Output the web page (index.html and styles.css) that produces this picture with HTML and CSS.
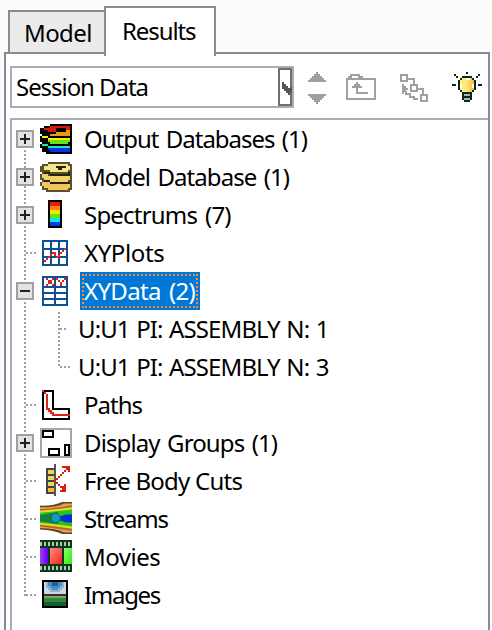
FILE: index.html
```html
<!DOCTYPE html>
<html lang="en">
<head>
<meta charset="utf-8">
<title>Results</title>
<link rel="stylesheet" href="styles.css">
</head>
<body>
<svg class="defs" width="0" height="0">
  <defs>
    <path id="rail-even" class="dots" d="M25 2V38"/>
    <path id="rail-odd" class="dots" d="M25 0V38"/>
    <g id="plus"><path fill="#a0a0a0" d="M16 10h18v18H16z"/><path fill="#e3e3e3" d="M18 12h14v14H18z"/><path stroke="#202020" stroke-width="2" d="M20 19h10M25 14v10"/></g>
    <g id="minus"><path fill="#a0a0a0" d="M16 10h18v18H16z"/><path fill="#e3e3e3" d="M18 12h14v14H18z"/><path stroke="#202020" stroke-width="2" d="M20 19h10"/></g>
    <linearGradient id="glow"><stop stop-color="#fff176"/><stop offset=".45" stop-color="#ffe680"/><stop offset="1" stop-color="#f8b840"/></linearGradient>
    <linearGradient id="violet"><stop stop-color="#a040ff"/><stop offset="1" stop-color="#6800ee"/></linearGradient>
    <linearGradient id="red" x2="1" y2="1"><stop stop-color="#ff9080"/><stop offset="1" stop-color="#f42020"/></linearGradient>
    <linearGradient id="green" x2="1" y2="1"><stop stop-color="#90ff70"/><stop offset="1" stop-color="#28ee08"/></linearGradient>
  </defs>
</svg>
<nav class="tabs">
  <div class="tab model"><span>Model</span></div>
  <div class="tab results"><span>Results</span></div>
</nav>
<main class="panel">
  <div class="toolbar">
    <div class="combo"><span>Session Data</span>
      <svg class="drop" width="14" height="38"><path fill="#fff" stroke="#707070" stroke-width="2" d="M1 1h12v36H1z"/><path fill="#555" d="M4 14h2v2h2v2h2v2h2v-1h2v6h-2v2h-2v-2H8v-2H6v-2H4z"/></svg>
    </div>
    <svg class="spin" width="18" height="32"><path fill="#a0a0a0" d="M8 0h2v2h2v2h2v2h2v2h2v2H0V8h2V6h2V4h2V2h2zM0 22h18v2h-2v2h-2v2h-2v2h-2v2H8v-2H6v-2H4v-2H2v-2H0z"/></svg>
    <svg class="folder" width="30" height="26"><path fill="none" stroke="#a0a0a0" stroke-width="2" d="M1 5h28v20H1zM3 4V3h2V1h8v2h3v2M11 9v10h11"/><path fill="#a0a0a0" d="M10 8h2v2h2v2h2v2H6v-2h2v-2h2z"/></svg>
    <svg class="chain" width="28" height="28"><path fill="none" stroke="#a0a0a0" stroke-width="2" d="M1 1h6v6H1zM11 11h6v6h-6zM21 21h6v6h-6zM8 5h6v6M18 15h5v6M6 17v3h4v3h4v2h4"/><path fill="#a0a0a0" d="M2 10h2v2h2v2h2v2H6v2H4v2H2z"/></svg>
    <svg class="bulb" width="30" height="30"><path fill="#062b18" d="M14 0h2v2h-2zM2 2h2v2h2v2H4V4H2zM26 2h2v2h-2v2h-2V4h2zM0 12h4v2H0zM26 12h4v2h-4zM10 4h10v2h2v2h2v10h-2v2h-2v8h-2v2h-6v-2h-2v-8H8v-2H6V8h2V6h2z"/><path fill="url(#glow)" d="M10 6h10v2h2v10h-2v2H10v-2H8V8h2z"/><path fill="#fff" d="M14 6h4v2h-4zM8 12h2v4H8zM20 12h2v4h-2z"/><path fill="#b0b0b0" d="M12 22h6v2h-6zM12 26h6v2h-6z"/></svg>
  </div>
  <ul class="tree">
    <li><svg viewBox="12 0 68 38"><path class="dots" d="M25 30V38"/><use href="#plus"/>
      <g transform="translate(40 4) scale(2)"><path d="M5 0h11v15H3v-1H1v-2H0v-2h1V9H0V6h1V5H0V2h2V1h3z"/><path fill="#d8170d" d="M5 1h10v2h-2V2H8v2H4V3H2V2h3z"/><path fill="#ee9a08" d="M8 4h5V3h2v3H5V5h3z"/><path fill="#f5ed14" d="M1 6h3v1h11v1H4V7H1z"/><path fill="#65e413" d="M4 8h11v1h-1v1H5V9H4z"/><path fill="#20e5c0" d="M1 10h3v1h11v1H4v-1H1z"/><path fill="#0b2fe9" d="M4 12h11v2H5v-1H4z"/></g></svg><span class="t1">Output Databases (1)</span></li>
    <li><svg viewBox="12 0 68 38"><use href="#rail-odd"/><use href="#plus"/>
      <g transform="translate(40 4) scale(2)"><path fill="#5a5228" d="M4 0h11v1h1v13h-1v1H3v-1H1v-2H0v-2h1V9H0V6h1V5H0V2h1V1h3z"/><path fill="#f3e68a" d="M4 1h10v1h1v2h-1v1H5V4H2V2h2z"/><path fill="#25220f" d="M8 2h5v1h-2v1H9V3H8zM2 5h3v1h9V5h1v2H5V6H2zM2 9h3v1h10v1H5v-1H2z"/><path fill="#efd366" d="M1 6h3v1h11v2h-1v1H5V9H2V8H1z"/><path fill="#f2c562" d="M1 10h4v1h10v2h-1v1H4v-1H2v-1H1z"/></g></svg><span class="t2">Model Database (1)</span></li>
    <li><svg viewBox="12 0 68 38"><use href="#rail-even"/><use href="#plus"/><path d="M48 4h14v28H48z"/><path fill="#f01808" d="M50 6h10v4H50z"/><path fill="#f58312" d="M50 10h10v4H50z"/><path fill="#f8e600" d="M50 14h10v4H50z"/><path fill="#64e60a" d="M50 18h10v4H50z"/><path fill="#08e9df" d="M50 22h10v4H50z"/><path fill="#0838ea" d="M50 26h10v4H50z"/></svg><span class="t3">Spectrums (7)</span></li>
    <li><svg viewBox="12 0 68 38"><use href="#rail-odd"/><path class="dots" d="M26 19h12"/><path fill="none" stroke="#124f92" stroke-width="2" d="M43 7h24v24H43zM51 7v24M59 7v24M43 15h24M43 23h24"/><path fill="#e2221c" d="M44 26h2v2h-2zM46 24h2v2h-2zM48 22h2v2h-2zM50 20h2v2h-2zM52 18h4v2h-4zM54 20h2v2h-2zM56 22h4v2h-4zM58 20h2v2h-2zM60 18h2v2h-2zM62 16h2v2h-2zM64 14h2v2h-2z"/></svg><span class="t4">XYPlots</span></li>
    <li><svg viewBox="12 0 68 38"><use href="#rail-even"/><use href="#minus"/><path fill="none" stroke="#124f92" stroke-width="2" d="M43 5h24v28H43zM55 5v28M43 15h24M43 21h24M43 27h24"/><path fill="#e2221c" d="M46 6h2v2h2v0h2V6h2v2h-2v4h2v2h-2v-2h-4v2h-2v-2h2V8h-2zM56 6h2v2h2v2h2V8h2V6h2v2h-2v2h-2v4h-2v-4h-2V8h-2z"/></svg><span class="selected"><b class="t5">XYData (2)</b></span></li>
    <li class="child"><svg viewBox="12 0 68 38"><use href="#rail-odd"/><path class="dots" d="M59 2V38M60 19h8"/></svg><span class="t6">U:U1 PI: ASSEMBLY N: 1</span></li>
    <li class="child"><svg viewBox="12 0 68 38"><use href="#rail-even"/><path class="dots" d="M59 0V18M60 19h10"/></svg><span class="t6">U:U1 PI: ASSEMBLY N: 3</span></li>
    <li><svg viewBox="12 0 68 38"><use href="#rail-odd"/><path class="dots" d="M26 19h12"/><path fill="#fff" stroke="#000" stroke-width="2" d="M43 5h10v18h16v10H43z"/><path fill="#e2221c" d="M42 4h2v2h2v2h2v14h2v2h2v2h2v2h16v2H52v-2h-2v-2h-2v-2h-2V8h-2V6h-2z"/></svg><span class="t7">Paths</span></li>
    <li><svg viewBox="12 0 68 38"><use href="#rail-even"/><use href="#plus"/><path fill="#fff" stroke="#aaa5a7" stroke-width="2" d="M41 5h30v28H41z"/><path fill="#fff" stroke="#000" stroke-width="2" d="M43 7h10v6H43zM49 25h10v6H49zM65 21h4v10h-4z"/></svg><span class="t8">Display Groups (1)</span></li>
    <li><svg viewBox="12 0 68 38"><use href="#rail-odd"/><path class="dots" d="M26 19h12"/><path fill="#ead85c" stroke="#444" stroke-width="2" d="M47 7h8v24h-8zM47 13h8M47 19h8M47 25h8"/><path fill="#f8bc31" d="M48 26h6v4h-6z"/><path stroke="#555" stroke-width="2" d="M55 2v32"/><path fill="#d91d0b" d="M54 18h2v-2h2v-2h2v-2h2v-2h2V8h2V6h-4V4h8v6h-2V8h-2v2h-2v2h-2v2h-2v2h-2v2h-2v2h2v2h2v2h4v-2h2v8h-6v-2h2v-2h-2v-2h-2v-2h-2v-2h-2z"/></svg><span class="t9">Free Body Cuts</span></li>
    <li><svg viewBox="12 0 68 38"><use href="#rail-even"/><path class="dots" d="M26 19h12"/><g class="smooth" transform="translate(40 2) scale(2)"><path fill="#6b421f" d="M0 1.8Q7 2 11 0h5v16h-5Q7 14 0 13.7z"/><path fill="#d8a46c" d="M0 2.6Q8 3 12 .8h4v14.4h-4Q8 13.2 0 13z"/><path fill="#b9671f" d="M0 3.6Q8 3 16 1.6v12.8Q8 13 0 12.2z"/><path fill="#e4e01a" d="M0 4.4Q8 3.8 16 2.6v10.8Q8 12.2 0 11.4z"/><path fill="#25c51d" d="M0 5.4Q8 4.8 16 3.8v8.4Q8 11.2 0 10.4z"/><path fill="#15803c" d="M0 6.6L9 5v6L0 9.6z"/><path fill="#062ddb" d="M7 8l6-1.8h3v4h-3z"/><circle fill="#129bc0" stroke="#1b5a50" stroke-width=".5" cx="7.8" cy="8" r="2.4"/></g></svg><span class="t10">Streams</span></li>
    <li><svg viewBox="12 0 68 38"><use href="#rail-odd"/><path class="dots" d="M26 19h12"/><path fill="#073b18" d="M40 2h32v32H40z"/><path stroke="#b5c4b5" stroke-width="4" stroke-dasharray="2 2" d="M40 6h32M40 30h32"/><path fill="url(#violet)" d="M40 10h8v16h-8z"/><path fill="url(#red)" d="M50 10h12v16H50z"/><path fill="url(#green)" d="M64 10h8v16h-8z"/></svg><span class="t11">Movies</span></li>
    <li><svg viewBox="12 0 68 38"><path class="dots" d="M25 2V20M26 19h10"/><path d="M42 4h26v28H42z"/><path fill="#c9d9ed" d="M44 6h22v12H44z"/><path fill="#8cb2d6" d="M46 6h18v6h-2v2h-2v2H50v-2h-2v-2h-2z"/><path fill="#508dbf" d="M48 6h14v4h-2v2h-2v2h-6v-2h-2v-2h-2z"/><path fill="#17639f" d="M52 6h6v4h-6z"/><path fill="#4b2b20" d="M44 18h22v2H44z"/><path fill="#68b168" d="M44 20h22v2H44z"/><path fill="#35863c" d="M44 22h22v4H44z"/><path fill="#12602d" d="M44 26h22v4H44z"/></svg><span class="t12">Images</span></li>
  </ul>
</main>
</body>
</html>
```
FILE: styles.css
```css
* { box-sizing: border-box; }
html, body { height: 100%; }
body {
  margin: 0;
  padding: 6px 0 0 4px;
  overflow: hidden;
  background: #fcfcfc;
  color: #000;
  font: 24px/38px "Noto Sans", "Open Sans", sans-serif;
}
svg { display: block; flex: none; shape-rendering: crispEdges; }
.smooth { shape-rendering: auto; }
.tabs { display: flex; align-items: flex-end; padding-left: 4px; height: 46px; }
.tab { border: 2px solid #868b94; border-bottom: 0; white-space: nowrap; }
.tab span { display: block; }
.model { width: 96px; height: 42px; padding: 2px 0 0 14px; background: #ebebeb; border-right: 0; letter-spacing: -.6px; }
.results { width: 112px; height: 50px; margin-bottom: -4px; padding: 4px 0 0 16px; background: #fff; position: relative; letter-spacing: -1.1px; }
.panel { width: 486px; height: 578px; border: 2px solid #868b94; border-bottom: 0; background: #fff; }
.toolbar { display: flex; align-items: flex-start; height: 64px; padding: 12px 0 0 4px; }
.combo { display: flex; justify-content: space-between; width: 284px; height: 42px; border: 2px solid #a8adb5; padding-left: 4px; letter-spacing: -1.05px; }
.spin { margin: 6px 0 0 14px; }
.folder { margin: 8px 0 0 20px; }
.chain { margin: 8px 0 0 24px; }
.bulb { margin: 6px 0 0 24px; }
.tree { margin: 0 0 0 4px; padding: 0; height: 514px; border: 2px solid #a8adb5; border-width: 2px 0 0 2px; list-style: none; }
.tree li { display: flex; height: 38px; }
.tree svg { width: 68px; height: 38px; }
.tree span { height: 38px; padding-left: 4px; white-space: nowrap; }
.tree .child span { margin-left: -6px; }
.dots { fill: none; stroke: #a0a0a0; stroke-width: 2; stroke-dasharray: 2 2; }
.tree .selected { width: 120px; padding: 2px; background: #0078d7; color: #fff; }
.selected b { display: block; height: 34px; padding-left: 0; line-height: 30px; font-weight: 400; border: 2px dotted #f58a3c; }

/* Per-label tracking */
.t1 { letter-spacing: -1px; word-spacing: 2px; }
.t2 { letter-spacing: -.93px; word-spacing: 2px; }
.t3 { letter-spacing: -.8px; word-spacing: 2.4px; }
.t4 { letter-spacing: -.4px; }
.t5 { letter-spacing: -.65px; word-spacing: 2.5px; }
.t6 { letter-spacing: -.9px; word-spacing: 1.2px; }
.t7 { letter-spacing: -1px; }
.t8 { letter-spacing: -.88px; word-spacing: 2px; }
.t9 { letter-spacing: -.75px; }
.t10 { letter-spacing: -1.2px; }
.t11 { letter-spacing: -.5px; }
.t12 { letter-spacing: -1.3px; }
```
